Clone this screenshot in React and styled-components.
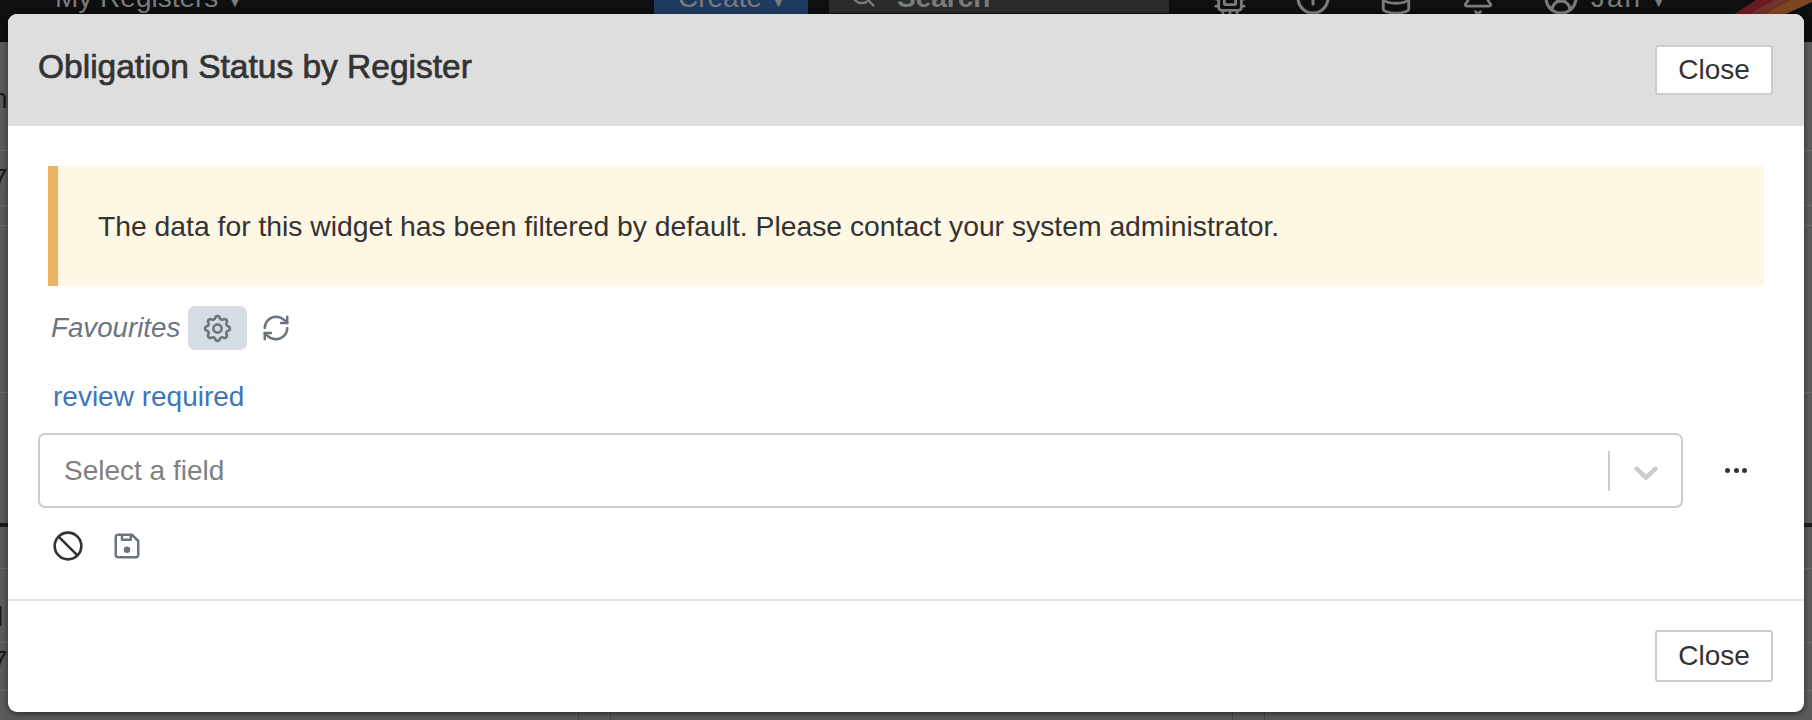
import React from 'react'
import styled, { createGlobalStyle } from 'styled-components'
import { RefreshCw, Search, Ban, Cpu, Info, Database, Bell, CircleUserRound } from 'lucide-react'
import { TbSettings } from 'react-icons/tb'

const GlobalStyle = createGlobalStyle`
  html, body { margin: 0; padding: 0; background: #5b5b5b; }
  body { width: 1812px; height: 720px; overflow: hidden; font-family: "Liberation Sans", Arial, sans-serif; }
`

// Page behind the dialog
const Page = styled.div`
  position: relative;
  width: 1812px;
  height: 720px;
  overflow: hidden;
  background-color: #5b5b5b;
  background-image:
    linear-gradient(#474747, #474747), linear-gradient(#474747, #474747),
    linear-gradient(#474747, #474747), linear-gradient(#474747, #474747);
  background-repeat: no-repeat;
  background-size: 1px 8px;
  background-position: 578px 712px, 610px 712px, 1232px 712px, 1264px 712px;
`

const NavBar = styled.div`
  height: 42px;
  background: #0d0f11;
  overflow: hidden;
  display: flex;
  align-items: flex-start;
  color: #7b7b7b;
  font-size: 28px;
`

// the top of the nav is scrolled away, only the lower part of its text shows
const NavLabel = styled.span`
  display: block;
  line-height: 10px;
  margin-top: -7px;
`

const NavBrand = styled.div`
  margin-left: 55px;
  width: 599px;
  height: 14px;
`

const NavCreate = styled.div`
  width: 154px;
  height: 14px;
  background: #1d3a5f;
  padding-left: 24px;
  box-sizing: border-box;
`

const NavSearch = styled.div`
  margin-left: 21px;
  width: 340px;
  height: 13px;
  background: #2a2b2b;
  display: flex;
  align-items: flex-start;
  gap: 20px;
  padding-left: 20px;
  box-sizing: border-box;
  font-weight: bold;
`

const SearchIcon = styled(Search)`
  margin-top: -19px;
`

const NavIcons = styled.div`
  display: flex;
  margin-left: 44px;
  gap: 48px;
  height: 16px;
  align-items: flex-end;
`

const NavUser = styled.div`
  align-self: flex-start;
  margin-left: -36px;
  letter-spacing: 2px;
`

const NavLogo = styled.svg`
  margin-left: auto;
  width: 78px;
  height: 14px;
`

const Caret = styled.span`
  font-size: 13px;
  margin-left: 10px;
`

const RowLine = styled.div`
  height: ${p => p.$h || 1}px;
  margin-top: ${p => p.$top}px;
  background: ${p => p.$dark ? '#1c1c1c' : '#6a6a6a'};
`

// bits of table text that peek out left of the dialog
const EdgeGlyph = styled.span`
  position: absolute;
  left: ${p => p.$left}px;
  top: ${p => p.$top}px;
  font-size: 28px;
  line-height: 30px;
  color: #1a1a1a;
`

// Dialog
const Modal = styled.div`
  position: absolute;
  left: 8px;
  top: 14px;
  width: 1796px;
  height: 698px;
  display: flex;
  flex-direction: column;
  background: #fff;
  border-radius: 9px;
  overflow: hidden;
  box-shadow: 0 2px 6px rgba(0, 0, 0, 0.5);
`

const Header = styled.div`
  height: 112px;
  flex: none;
  background: #dedede;
  display: flex;
  align-items: center;
  justify-content: space-between;
  padding: 0 31px 0 30px;
  box-sizing: border-box;
`

const Title = styled.h4`
  margin: 0 0 6px;
  font-size: 33.5px;
  font-weight: normal;
  color: #333;
  -webkit-text-stroke: 0.7px #333;
`

const Button = styled.button`
  width: 118px;
  height: ${p => p.$h}px;
  background: #fff;
  border: 2px solid #ccc;
  border-radius: 3px;
  color: #333;
  font-family: inherit;
  font-size: 28px;
  padding: 0;
`

const Body = styled.div`
  flex: 1;
  padding: 40px 40px 0 40px;
`

const Alert = styled.div`
  height: 120px;
  box-sizing: border-box;
  background: #fdf7e3;
  border-left: 10px solid #ebb25f;
  padding-left: 40px;
  display: flex;
  align-items: center;
  color: #333;
  font-size: 28.3px;
`

const FavRow = styled.div`
  display: flex;
  align-items: center;
  height: 44px;
  margin-top: 20px;
  padding-left: 3px;
`

const FavLabel = styled.em`
  font-size: 27.7px;
  color: #6c757d;
  margin-right: 8px;
`

const GearButton = styled.div`
  width: 59px;
  height: 44px;
  border-radius: 7px;
  background: #d5dce4;
  color: #6c757d;
  display: flex;
  align-items: center;
  justify-content: center;
`

const RefreshButton = styled.div`
  margin-left: 14px;
  color: #6c757d;
  display: flex;
`

const ReviewLink = styled.a`
  display: block;
  margin: 28px 0 0 5px;
  height: 38px;
  line-height: 38px;
  font-size: 28px;
  color: #3d75b8;
`

const FieldRow = styled.div`
  display: flex;
  align-items: center;
  margin: 17px 0 0 -10px;
`

const Select = styled.div`
  width: 1645px;
  height: 75px;
  box-sizing: border-box;
  border: 2px solid #ccc;
  border-radius: 7px;
  display: flex;
  align-items: center;
  justify-content: space-between;
  padding-left: 24px;
  color: #808080;
  font-size: 28px;
`

const SelectIndicators = styled.div`
  display: flex;
  align-items: center;
  color: #ccc;
`

const Separator = styled.span`
  width: 2px;
  height: 40px;
  background: #ccc;
`

const Chevron = styled.svg`
  width: 40px;
  height: 40px;
  margin: 2px 15px 0 16px;
  fill: currentColor;
`

const Dots = styled.div`
  margin-left: 42px;
  display: flex;
  gap: 3.5px;
`

const Dot = styled.span`
  width: 5px;
  height: 5px;
  border-radius: 50%;
  background: #333;
`

const ActionRow = styled.div`
  display: flex;
  align-items: center;
  margin: 22px 0 0 4px;
  color: #6c757d;
`

const BanIcon = styled(Ban)`
  color: #333;
  margin-right: 28px;
`

const Footer = styled.div`
  height: 113px;
  flex: none;
  box-sizing: border-box;
  border-top: 2px solid #e5e5e5;
  display: flex;
  justify-content: flex-end;
  padding: 29px 31px 0 0;
`

// floppy with a dot, lucide's save has the wrong inside
function FloppyIcon() {
  return (
    <svg width="30" height="30" viewBox="0 0 24 24" fill="none" stroke="currentColor" strokeWidth="2" strokeLinejoin="round">
      <path d="M5 3h11l5 5v11a2 2 0 0 1-2 2H5a2 2 0 0 1-2-2V5a2 2 0 0 1 2-2z" />
      <path d="M8 3v4h7V3" />
      <circle cx="12" cy="15" r="2.6" fill="currentColor" stroke="none" />
    </svg>
  )
}

export default function App() {
  return (
    <Page>
      <GlobalStyle />
      <NavBar>
        <NavBrand><NavLabel>My Registers<Caret>▼</Caret></NavLabel></NavBrand>
        <NavCreate><NavLabel>Create<Caret>▼</Caret></NavLabel></NavCreate>
        <NavSearch><SearchIcon size={28} /><NavLabel>Search</NavLabel></NavSearch>
        <NavIcons>
          <Cpu size={34} />
          <Info size={36} />
          <Database size={34} />
          <Bell size={34} />
          <CircleUserRound size={36} />
          <NavUser><NavLabel>Jan<Caret>▼</Caret></NavLabel></NavUser>
        </NavIcons>
        <NavLogo viewBox="0 0 78 14">
          <path d="M0 14 L22 0 H40 L14 14 Z" fill="#6b1a22" />
          <path d="M14 14 L40 0 H56 L30 14 Z" fill="#74302a" />
          <path d="M30 14 L56 0 H78 V2 L52 14 Z" fill="#7d4620" />
        </NavLogo>
      </NavBar>
      <RowLine $top={108} />
      <RowLine $top={54} />
      <RowLine $top={19} />
      <RowLine $top={166} />
      <RowLine $top={130} $h={4} $dark />
      <RowLine $top={41} />
      <RowLine $top={73} />
      <RowLine $top={47} />
      <EdgeGlyph $left={-8} $top={84}>n</EdgeGlyph>
      <EdgeGlyph $left={-8} $top={164}>7</EdgeGlyph>
      <EdgeGlyph $left={-3} $top={602}>l</EdgeGlyph>
      <EdgeGlyph $left={-8} $top={646}>7</EdgeGlyph>

      <Modal>
        <Header>
          <Title>Obligation Status by Register</Title>
          <Button $h={50}>Close</Button>
        </Header>
        <Body>
          <Alert>The data for this widget has been filtered by default. Please contact your system administrator.</Alert>
          <FavRow>
            <FavLabel>Favourites</FavLabel>
            <GearButton><TbSettings size={33} strokeWidth={1.9} /></GearButton>
            <RefreshButton><RefreshCw size={30} strokeWidth={2} /></RefreshButton>
          </FavRow>
          <ReviewLink>review required</ReviewLink>
          <FieldRow>
            <Select>
              Select a field
              <SelectIndicators>
                <Separator />
                <Chevron viewBox="0 0 20 20"><path d="M4.516 7.548c0.436-0.446 1.043-0.481 1.576 0l3.908 3.747 3.908-3.747c0.533-0.481 1.141-0.446 1.574 0 0.436 0.445 0.408 1.197 0 1.615-0.406 0.418-4.695 4.502-4.695 4.502-0.217 0.223-0.502 0.335-0.787 0.335s-0.57-0.112-0.789-0.335c0 0-4.287-4.084-4.695-4.502s-0.436-1.17 0-1.615z" /></Chevron>
              </SelectIndicators>
            </Select>
            <Dots><Dot /><Dot /><Dot /></Dots>
          </FieldRow>
          <ActionRow>
            <BanIcon size={32} strokeWidth={2} />
            <FloppyIcon />
          </ActionRow>
        </Body>
        <Footer>
          <Button $h={52}>Close</Button>
        </Footer>
      </Modal>
    </Page>
  )
}
